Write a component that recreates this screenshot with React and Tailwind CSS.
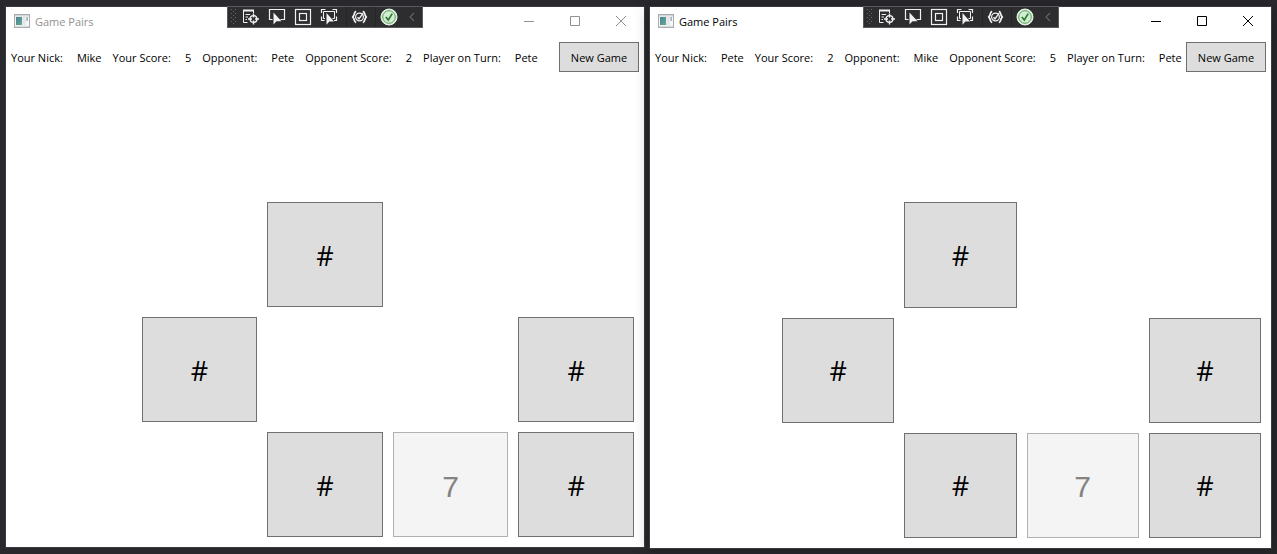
import React from "react";

const CARDS = [
  null, null, null, null, null,
  null, null, "#", null, null,
  null, "#", null, null, "#",
  null, null, "#", "7", "#",
];

function AppIcon() {
  return (
    <svg className="h-[14px] w-4" viewBox="0 0 16 14" aria-hidden="true">
      <defs>
        <linearGradient id="pane" x1="0" y1="0" x2="1" y2="1">
          <stop offset="0" stopColor="#4a8496" />
          <stop offset="1" stopColor="#66a98f" />
        </linearGradient>
      </defs>
      <rect x="0.5" y="0.5" width="15" height="13" fill="#f6f7f7" stroke="#a9adaf" />
      <rect x="1" y="1" width="14" height="1.5" fill="#d3d6d8" />
      <rect x="2" y="3" width="6" height="8" fill="url(#pane)" />
      <rect x="8.5" y="3" width="3" height="8" fill="#dfe5e8" />
      <rect x="12.3" y="3" width="1.7" height="4" fill="#a8b4ba" />
      <rect x="1" y="11.7" width="14" height="1.3" fill="#dcdfe0" />
    </svg>
  );
}

function ToolButton({ label, children }) {
  return (
    <button type="button" aria-label={label} className="flex w-[26px] items-center justify-center">
      <svg className="size-[18px]" viewBox="0 0 18 18" fill="none" stroke="#f1f1f1" aria-hidden="true">
        {children}
      </svg>
    </button>
  );
}

function DebugToolbar() {
  return (
    <div
      role="toolbar"
      aria-label="Debug tools"
      className="absolute -top-px left-1/2 flex h-[22px] w-[196px] -translate-x-1/2 border border-[#5a5a5e] bg-[#2d2d30]"
    >
      <svg className="h-5 w-[10px]" viewBox="0 0 10 20" fill="#68686c" aria-hidden="true">
        {[2, 6, 10, 14].map((y) => (
          <g key={y}>
            <rect x="3" y={y} width="1" height="1" />
            <rect x="7" y={y} width="1" height="1" />
            <rect x="5" y={y + 2} width="1" height="1" />
          </g>
        ))}
      </svg>
      <ToolButton label="Go to live visual tree">
        <path d="M5.5 14.5H1.5V2.5H11.5V5" />
        <path d="M1 2.5H12" strokeWidth="2" />
        <path d="M3.5 6.5H8M3.5 9H6M3.5 11.5H5" />
        <circle cx="11.5" cy="11" r="3.4" strokeWidth="1.4" />
        <path d="M11.5 5.5V9.5M11.5 12.5V16.5M6 11H10M13 11H17" strokeWidth="1.4" />
      </ToolButton>
      <ToolButton label="Select element">
        <path d="M4.5 11.5H1.5V1.5H16.5V11.5H12.5" strokeWidth="1.2" />
        <path d="M5.5 4.5V16.5L8.5 13.3H13.5Z" fill="#f1f1f1" stroke="none" />
      </ToolButton>
      <ToolButton label="Display layout adorners">
        <rect x="1.5" y="1.5" width="15" height="15" strokeWidth="1.2" />
        <rect x="5.5" y="5.5" width="7" height="7" strokeWidth="1.2" />
      </ToolButton>
      <ToolButton label="Track focused element">
        <path d="M1.5 5V1.5H5.5M12.5 1.5H16.5V5M16.5 8.5V12.5H14M1.5 8.5V12.5H4.5" strokeWidth="1.2" />
        <path d="M5 10.5H3.5V3.5H14.5V10.5H12.5" />
        <path d="M6.5 5V16.8L9.3 13.6H14Z" fill="#f1f1f1" stroke="none" />
      </ToolButton>
      <span className="w-[5px] border-r border-[#252528]" />
      <ToolButton label="Binding failures">
        <circle cx="8.5" cy="9" r="3.9" strokeWidth="1.2" />
        <path d="M6.5 9.2L8 10.8L12.2 5.2" strokeWidth="1.4" />
        <path
          d="M5.2 3.4C3 3.8 3.5 6.6 2.6 7.8L1.8 9L2.6 10.2C3.5 11.4 3 14.2 5.2 14.6M11.8 3.4C14 3.8 13.5 6.6 14.4 7.8L15.2 9L14.4 10.2C13.5 11.4 14 14.2 11.8 14.6"
          strokeWidth="1.8"
        />
      </ToolButton>
      <span className="w-[3px] border-r border-[#252528]" />
      <ToolButton label="Hot reload">
        <circle cx="9" cy="9" r="8" fill="#d9f0d9" stroke="#e7f5e7" strokeWidth="1" />
        <circle cx="9" cy="9" r="6.3" fill="#d3edd3" stroke="#5da05f" strokeWidth="1" />
        <path d="M5.8 9L8.3 12L12.2 5.6" stroke="#2c7a33" strokeWidth="1.7" />
      </ToolButton>
      <button type="button" aria-label="Collapse toolbar" className="flex flex-1 items-center justify-center">
        <svg className="h-[10px] w-[6px]" viewBox="0 0 6 10" fill="none" stroke="#66666a" aria-hidden="true">
          <path d="M5 1L1 5L5 9" strokeWidth="1.1" />
        </svg>
      </button>
    </div>
  );
}

function WindowButton({ label, d }) {
  return (
    <button type="button" aria-label={label} className="flex h-7 w-[46px] items-center justify-center">
      <svg className="size-[10px]" viewBox="0 0 10 10" fill="none" stroke="currentColor" aria-hidden="true">
        <path d={d} />
      </svg>
    </button>
  );
}

function Stat({ label, value }) {
  return (
    <div className="flex gap-[14px]">
      <dt>{label}</dt>
      <dd>{value}</dd>
    </div>
  );
}

function GameWindow({ active, className, nick, score, opponent, opponentScore, turn }) {
  return (
    <section className={`relative flex min-w-0 flex-col bg-white outline outline-[#3b3b3f] ${className}`}>
      <header className={`flex h-7 items-center pl-2 ${active ? "text-black" : "text-[#919191]"}`}>
        <AppIcon />
        <h1 className="ml-[5px] flex-1 pt-[2px] text-[11px] leading-4">Game Pairs</h1>
        <WindowButton label="Minimize" d="M0 5.5H10" />
        <WindowButton label="Maximize" d="M0.5 0.5H9.5V9.5H0.5Z" />
        <WindowButton label="Close" d="M0 0L10 10M10 0L0 10" />
      </header>
      <DebugToolbar />
      <div className="mt-[7px] flex h-[30px] items-center justify-between px-[5px]">
        <dl className="flex min-w-0 gap-[11px] pt-[2px] text-[11px] leading-4 whitespace-nowrap">
          <Stat label="Your Nick:" value={nick} />
          <Stat label="Your Score:" value={score} />
          <Stat label="Opponent:" value={opponent} />
          <Stat label="Opponent Score:" value={opponentScore} />
          <Stat label="Player on Turn:" value={turn} />
        </dl>
        <button
          type="button"
          className="h-[30px] w-20 shrink-0 border border-[#707070] bg-[#dddddd] pt-[2px] text-[11px] leading-4 whitespace-nowrap"
        >
          New Game
        </button>
      </div>
      <main className="mt-[15px] grid flex-1 grid-cols-5 grid-rows-4 gap-[10px] px-[10px] pb-[10px]">
        {CARDS.map((card, i) => {
          if (card === null) return <div key={i} />;
          return card === "#" ? (
            <button key={i} type="button" className="border border-[#707070] bg-[#dddddd] pt-[2px] text-[27px] leading-8">
              #
            </button>
          ) : (
            <button
              key={i}
              type="button"
              disabled
              className="border border-[#adb2b5] bg-[#f4f4f4] pt-1 font-['Liberation_Sans',sans-serif] text-[30px] leading-8 text-[#838383]"
            >
              {card}
            </button>
          );
        })}
      </main>
    </section>
  );
}

export default function App() {
  return (
    <div className="flex min-h-screen gap-[6px] bg-[#29292d] px-[6px] pt-[7px] pb-[6px] font-['Open_Sans','Noto_Sans',sans-serif] text-black">
      <GameWindow
        className="mb-px flex-[638_1_0%]"
        nick="Mike"
        score="5"
        opponent="Pete"
        opponentScore="2"
        turn="Pete"
      />
      <GameWindow
        active
        className="flex-[621_1_0%] shadow-[0_2px_14px_rgba(0,0,0,0.35)]"
        nick="Pete"
        score="2"
        opponent="Mike"
        opponentScore="5"
        turn="Pete"
      />
    </div>
  );
}
